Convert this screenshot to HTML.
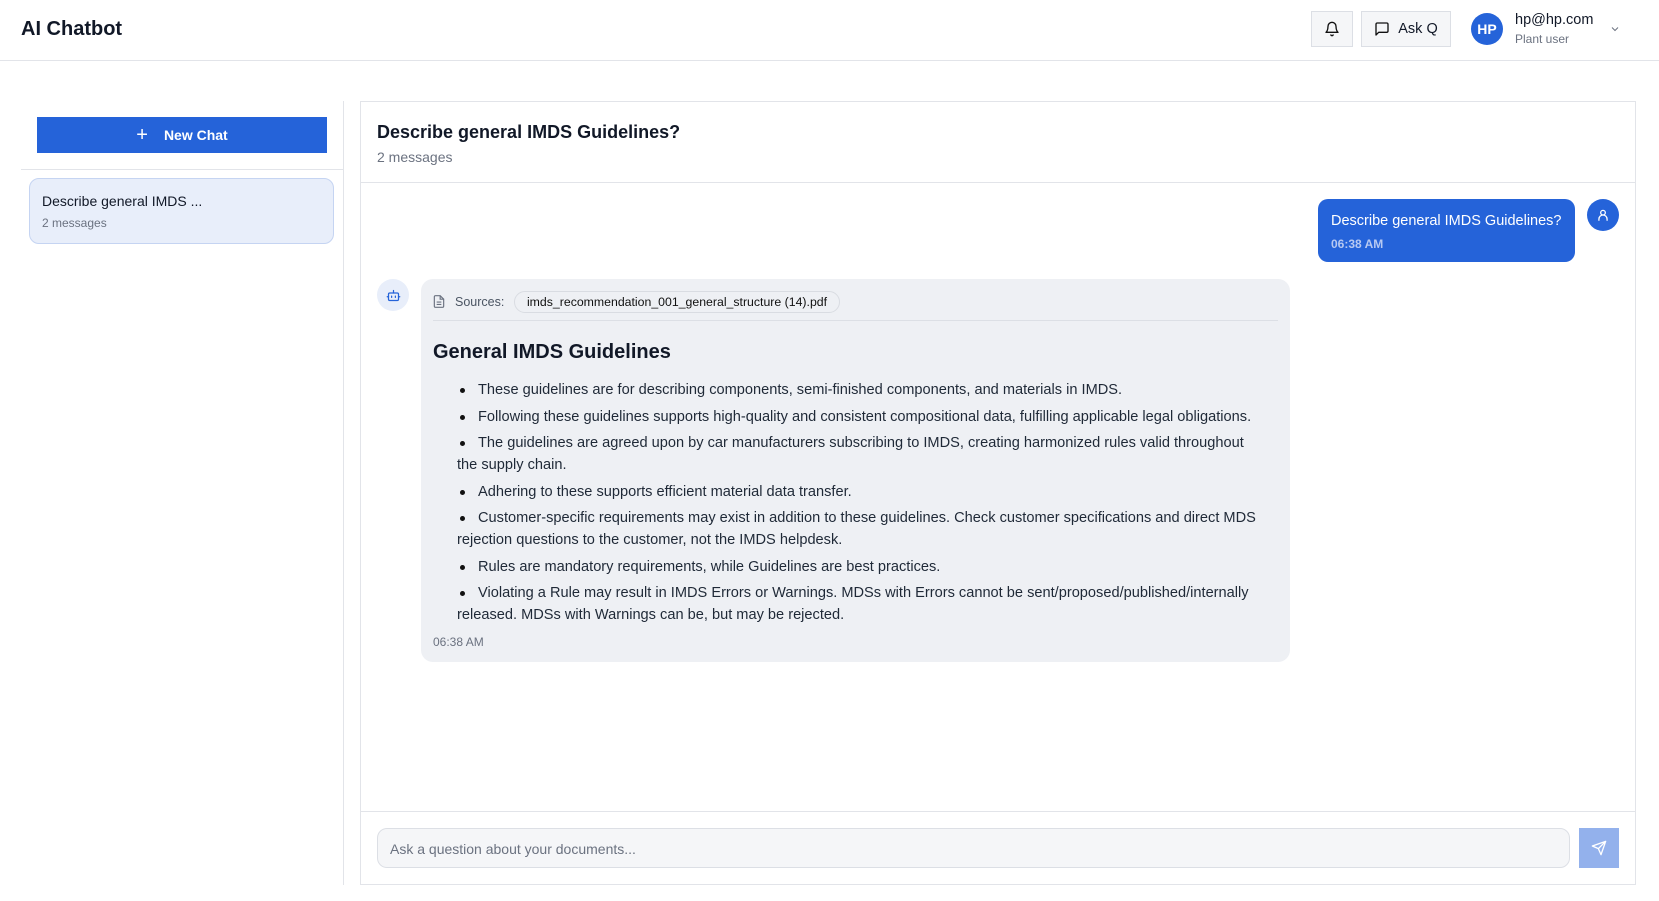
<!DOCTYPE html>
<html><head><meta charset="utf-8"><style>
*{box-sizing:border-box;margin:0;padding:0}
body{width:1659px;height:901px;background:#fff;font-family:"Liberation Sans",sans-serif;color:#111827;position:relative;overflow:hidden}
.a{position:absolute}
.hdr{left:0;top:0;width:1659px;height:61px;border-bottom:1px solid #e2e4e9}
.btn{background:#f5f6f8;border:1px solid #dcdfe5;display:flex;align-items:center;justify-content:center}
.gray{color:#6b7280}
ul{list-style:none}
li{position:relative;text-indent:21px;margin-bottom:4.5px;line-height:22px;font-size:14.6px;color:#1f2937}
li:before{content:"";position:absolute;left:3px;top:9px;width:5px;height:5px;border-radius:50%;background:#111}
</style></head><body>
<div class="a hdr"></div>
<div class="a" style="left:21px;top:18px;font-size:20px;font-weight:bold">AI Chatbot</div>
<div class="a btn" style="left:1311px;top:11px;width:42px;height:36px">
<svg width="16" height="16" viewBox="0 0 24 24" fill="none" stroke="#111" stroke-width="2" stroke-linecap="round" stroke-linejoin="round"><path d="M6 8a6 6 0 0 1 12 0c0 7 3 9 3 9H3s3-2 3-9"/><path d="M10.3 21a1.94 1.94 0 0 0 3.4 0"/></svg></div>
<div class="a btn" style="left:1361px;top:11px;width:90px;height:36px;font-size:14.5px;gap:8px">
<svg width="16" height="16" viewBox="0 0 24 24" fill="none" stroke="#111" stroke-width="2" stroke-linejoin="round"><path d="M21 15a2 2 0 0 1-2 2H7l-4 4V5a2 2 0 0 1 2-2h14a2 2 0 0 1 2 2z"/></svg>Ask Q</div>
<div class="a" style="left:1471px;top:13px;width:32px;height:32px;border-radius:50%;background:#2563d9;color:#fff;font-size:14px;font-weight:bold;display:flex;align-items:center;justify-content:center">HP</div>
<div class="a" style="left:1515px;top:12px;font-size:14.5px">hp@hp.com</div>
<div class="a gray" style="left:1515px;top:32px;font-size:12px">Plant user</div>
<svg class="a" style="left:1609px;top:23px" width="12" height="12" viewBox="0 0 24 24" fill="none" stroke="#6b7280" stroke-width="2"><path d="M6 9l6 6 6-6"/></svg>

<div class="a" style="left:343px;top:101px;width:1px;height:784px;background:#e2e4e9"></div>
<div class="a" style="left:37px;top:117px;width:290px;height:36px;background:#2563d9;color:#fff;font-size:14px;font-weight:bold;display:flex;align-items:center;justify-content:center;gap:16px"><span style="font-size:20px;font-weight:normal">+</span>New Chat</div>
<div class="a" style="left:21px;top:169px;width:322px;height:1px;background:#e2e4e9"></div>
<div class="a" style="left:29px;top:178px;width:305px;height:66px;background:#e8eefa;border:1px solid #c5d4f2;border-radius:10px"></div>
<div class="a" style="left:42px;top:193px;font-size:14px">Describe general IMDS ...</div>
<div class="a gray" style="left:42px;top:216px;font-size:12px">2 messages</div>

<div class="a" style="left:360px;top:101px;width:1276px;height:784px;border:1px solid #e2e4e9"></div>
<div class="a" style="left:377px;top:122px;font-size:18px;font-weight:bold">Describe general IMDS Guidelines?</div>
<div class="a gray" style="left:377px;top:149px;font-size:14px">2 messages</div>
<div class="a" style="left:361px;top:182px;width:1274px;height:1px;background:#e2e4e9"></div>

<div class="a" style="left:1318px;top:199px;width:257px;height:63px;background:#2563d9;border-radius:10px;color:#fff">
<div style="position:absolute;left:13px;top:14px;font-size:14.5px">Describe general IMDS Guidelines?</div>
<div style="position:absolute;left:13px;top:38px;font-size:12px;font-weight:bold;color:#b7c9f2">06:38 AM</div></div>
<div class="a" style="left:1587px;top:199px;width:32px;height:32px;border-radius:50%;background:#2563d9;display:flex;align-items:center;justify-content:center">
<svg width="14" height="14" viewBox="0 0 24 24" fill="none" stroke="#fff" stroke-width="2.2" stroke-linecap="round"><circle cx="12" cy="8" r="4"/><path d="M5 21v-2a6 6 0 0 1 14 0v2"/></svg></div>

<div class="a" style="left:377px;top:279px;width:32px;height:32px;border-radius:50%;background:#e8eefa;display:flex;align-items:center;justify-content:center">
<svg width="15" height="15" viewBox="0 0 24 24" fill="none" stroke="#2563d9" stroke-width="2" stroke-linecap="round"><rect x="4" y="8" width="16" height="12" rx="2"/><path d="M12 8V4M9 13v2M15 13v2M2 14h2M20 14h2"/></svg></div>
<div class="a" style="left:421px;top:279px;width:869px;height:383px;background:#eef0f4;border-radius:12px"></div>
<svg class="a" style="left:432px;top:294px" width="14" height="15" viewBox="0 0 24 24" fill="none" stroke="#6b7280" stroke-width="2"><path d="M14 2H6a2 2 0 0 0-2 2v16a2 2 0 0 0 2 2h12a2 2 0 0 0 2-2V8z"/><path d="M14 2v6h6M8 13h8M8 17h8"/></svg>
<div class="a" style="left:455px;top:295px;font-size:12.5px;color:#4b5563">Sources:</div>
<div class="a" style="left:514px;top:291px;width:326px;height:22px;border:1px solid #d9dce2;border-radius:11px;font-size:12.3px;display:flex;align-items:center;justify-content:center;color:#111">imds_recommendation_001_general_structure (14).pdf</div>
<div class="a" style="left:433px;top:320px;width:845px;height:1px;background:#dcdfe5"></div>
<div class="a" style="left:433px;top:341px;font-size:20px;font-weight:bold">General IMDS Guidelines</div>
<ul class="a" style="left:457px;top:379px;width:806px">
<li>These guidelines are for describing components, semi-finished components, and materials in IMDS.</li>
<li>Following these guidelines supports high-quality and consistent compositional data, fulfilling applicable legal obligations.</li>
<li>The guidelines are agreed upon by car manufacturers subscribing to IMDS, creating harmonized rules valid throughout the supply chain.</li>
<li>Adhering to these supports efficient material data transfer.</li>
<li>Customer-specific requirements may exist in addition to these guidelines. Check customer specifications and direct MDS rejection questions to the customer, not the IMDS helpdesk.</li>
<li>Rules are mandatory requirements, while Guidelines are best practices.</li>
<li>Violating a Rule may result in IMDS Errors or Warnings. MDSs with Errors cannot be sent/proposed/published/internally released. MDSs with Warnings can be, but may be rejected.</li>
</ul>
<div class="a gray" style="left:433px;top:635px;font-size:12px">06:38 AM</div>

<div class="a" style="left:361px;top:811px;width:1274px;height:1px;background:#e2e4e9"></div>
<div class="a" style="left:377px;top:828px;width:1193px;height:40px;background:#f5f6f8;border:1px solid #dcdfe5;border-radius:10px;font-size:14px;color:#6b7280;padding:12px 12px">Ask a question about your documents...</div>
<div class="a" style="left:1579px;top:828px;width:40px;height:40px;background:#93b1ec;display:flex;align-items:center;justify-content:center">
<svg width="16" height="16" viewBox="0 0 24 24" fill="none" stroke="#fff" stroke-width="2" stroke-linejoin="round"><path d="M22 2L11 13M22 2l-7 20-4-9-9-4z"/></svg></div>
</body></html>
